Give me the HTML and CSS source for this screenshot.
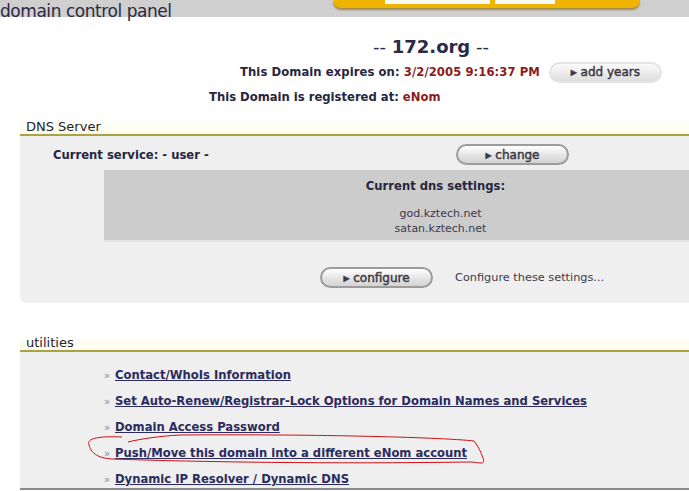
FILE: index.html
```html
<!DOCTYPE html>
<html lang="en">
<head>
  <meta charset="UTF-8" />
  <title>domain control panel</title>
  <link rel="stylesheet" href="styles.css">
</head>
<body>

<div class="page">
  <div class="topbar">
    <h1 class="title">domain control panel</h1>
    <div class="tab">
      <span class="tab-field wide"></span>
      <span class="tab-field"></span>
    </div>
  </div>

  <div class="domain-info">
    <div class="domain-name">-- <b>172.org</b> --</div>
    <div class="expires">
      <span class="expires-text">This Domain expires on: <span class="red">3/2/2005 9:16:37 PM</span></span>
      <button class="pill faded">&#9656; add years</button>
    </div>
    <div class="registrar">This Domain is registered at: <span class="red">eNom</span></div>
  </div>

  <div class="section dns">
    <h2 class="section-head">DNS Server</h2>
    <div class="panel">
      <div class="service-row">
        <span class="service">Current service: - user -</span>
        <button class="pill">&#9656; change</button>
      </div>
      <div class="dns-box">
        <div class="dns-title">Current dns settings:</div>
        <div class="dns-list">
          god.kztech.net<br>
          satan.kztech.net
        </div>
      </div>
      <div class="configure-row">
        <button class="pill">&#9656; configure</button>
        <span class="hint">Configure these settings...</span>
      </div>
    </div>
  </div>

  <div class="section utilities">
    <h2 class="section-head">utilities</h2>
    <div class="panel links">
      <div class="link-row"><span class="bullet">&raquo;</span><a href="#">Contact/WhoIs Information</a></div>
      <div class="link-row"><span class="bullet">&raquo;</span><a href="#">Set Auto-Renew/Registrar-Lock Options for Domain Names and Services</a></div>
      <div class="link-row"><span class="bullet">&raquo;</span><a href="#">Domain Access Password</a></div>
      <div class="link-row"><span class="bullet">&raquo;</span><a href="#">Push/Move this domain into a different eNom account</a></div>
      <div class="link-row"><span class="bullet">&raquo;</span><a href="#">Dynamic IP Resolver / Dynamic DNS</a></div>
    </div>
  </div>

  <!-- hand drawn marker around the push/move link -->
  <svg class="scribble" width="689" height="491" viewBox="0 0 689 491">
    <path d="M122 437 C 100 436, 86 438, 89 445 C 91 452, 96 458, 112 459 C 200 462, 330 464, 470 462 C 478 462, 486 466, 483 458 C 481 452, 478 446, 474 441 C 440 437, 300 434, 180 435 C 160 436, 140 439, 128 442"
          fill="none" stroke="#d01010" stroke-width="1"/>
  </svg>
</div>

</body>
</html>
```

FILE: styles.css
```css
body {
  margin: 0;
  background: #ffffff;
  font-family: "DejaVu Sans", Verdana, sans-serif;
  color: #26263f;
}
.page {
  position: relative;
  width: 689px;
  height: 491px;
  overflow: hidden;
}
.topbar {
  height: 17px;
  background: #cfcfcf;
  display: flex;
  align-items: flex-start;
}
.title {
  margin: 0;
  width: 173px;
  padding-top: 3px;
  font-size: 17px;
  font-weight: normal;
  line-height: 17px;
  color: #2a2a44;
  white-space: nowrap;
  letter-spacing: -0.45px;
}
.tab {
  margin-left: 160px;
  width: 307px;
  height: 8px;
  background: #efb300;
  border-radius: 0 0 12px 12px;
  box-shadow: 0 2px 2px #a08a50;
  display: flex;
  gap: 5px;
  padding-left: 52px;
  box-sizing: border-box;
}
.tab-field {
  width: 60px;
  height: 4px;
  background: #fbfbf4;
}
.tab-field.wide {
  width: 105px;
}

.domain-info {
  font-size: 11.6px;
  font-weight: bold;
}
.domain-name {
  margin: 21px 0 0 373px;
  font-size: 18px;
  font-weight: normal;
  line-height: 18px;
  color: #2a2a48;
}
.domain-name b {
  font-weight: bold;
}
.expires {
  display: flex;
  align-items: center;
  gap: 9px;
  margin: 5px 0 0 240px;
  height: 22px;
}
.expires-text {
  letter-spacing: 0.08px;
}
.registrar {
  margin: 7px 0 0 209px;
  line-height: 14px;
}
.red {
  color: #8c1c1c;
}

.pill {
  width: 113px;
  height: 21px;
  border: 2px solid #9c9c9c;
  border-radius: 11px;
  background: linear-gradient(#ffffff, #e2e2e2 60%, #d4d4d4);
  font-family: "DejaVu Sans", sans-serif;
  font-size: 12px;
  font-weight: normal;
  -webkit-text-stroke: 0.45px #3a3a44;
  color: #3a3a44;
  padding: 0;
  line-height: 16px;
}
.pill.faded {
  border-color: #e4e4e4;
  background: linear-gradient(#fbfbfb, #dedede);
}

.section-head {
  margin: 0 0 0 20px;
  padding-left: 6px;
  font-size: 13px;
  font-weight: normal;
  color: #222233;
  line-height: 15px;
  border-bottom: 2px solid #aaa244;
  background: linear-gradient(#ffffff, #fdfcea);
}
.panel {
  margin-left: 20px;
  background: #efefef;
  font-size: 11.6px;
}
.dns {
  margin-top: 15px;
}
.dns .panel {
  height: 167px;
  border-radius: 0 0 0 7px;
  padding-top: 8px;
  box-sizing: border-box;
}
.service-row {
  display: flex;
  align-items: center;
  height: 21px;
}
.service {
  width: 403px;
  padding-left: 33px;
  font-weight: bold;
}
.dns-box {
  margin: 5px 0 0 84px;
  height: 72px;
  background: #cccccc;
  border-bottom: 2px solid #e2e2e2;
  text-align: center;
  padding: 9px 0 0 78px;
  box-sizing: border-box;
}
.dns-title {
  font-weight: bold;
}
.dns-list {
  margin-top: 13px;
  line-height: 15px;
  color: #3a3a4c;
  font-weight: normal;
  font-size: 11px;
  padding-left: 10px;
}
.configure-row {
  display: flex;
  align-items: center;
  gap: 22px;
  margin: 25px 0 0 300px;
}
.hint {
  color: #3a3a4c;
  font-size: 11.3px;
}

.utilities {
  margin-top: 32px;
}
.links {
  height: 138px;
  border-bottom: 2px solid #8a8a8a;
  padding: 16px 0 0 84px;
  box-sizing: border-box;
}
.link-row {
  height: 26px;
  line-height: 14px;
}
.bullet {
  display: inline-block;
  width: 11px;
  color: #8a8a8a;
  font-size: 10px;
}
.link-row a {
  color: #2b2b5e;
  font-weight: bold;
}

.scribble {
  position: absolute;
  top: 0;
  left: 0;
  pointer-events: none;
}
```
